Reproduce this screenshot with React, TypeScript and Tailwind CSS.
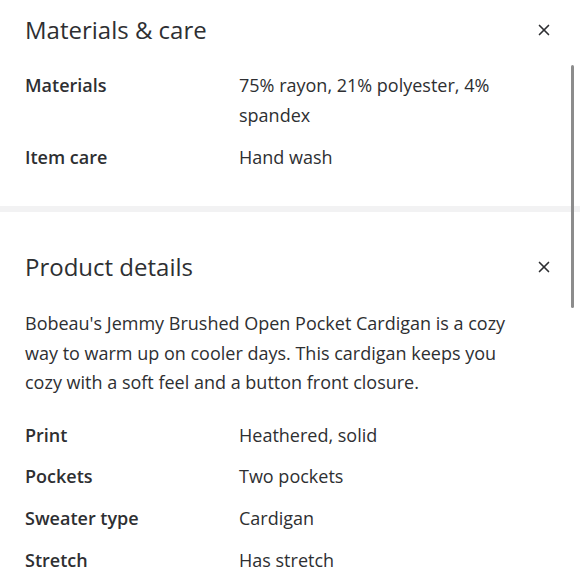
import { X } from 'lucide-react';

const care = [
  { label: 'Materials', value: '75% rayon, 21% polyester, 4% spandex' },
  { label: 'Item care', value: 'Hand wash' },
];

const details = [
  { label: 'Print', value: 'Heathered, solid' },
  { label: 'Pockets', value: 'Two pockets' },
  { label: 'Sweater type', value: 'Cardigan' },
  { label: 'Stretch', value: 'Has stretch' },
];

function Row({ label, value }: { label: string; value: string }) {
  return (
    <div className="flex">
      <div className="w-[214px] shrink-0 font-semibold">{label}</div>
      <div className="w-[270px]">{value}</div>
    </div>
  );
}

export default function App() {
  return (
    <div
      className="relative w-[580px] h-[580px] overflow-hidden bg-white text-[#2e2f32] text-[18px] leading-[30px]"
      style={{ fontFamily: '"Open Sans", Lato, sans-serif' }}
    >
      <section className="pl-[25px] pr-[28px] pt-[13px] pb-[34px]">
        <div className="flex items-center justify-between h-[34px]">
          <h2 className="text-[24px] leading-[34px]">Materials &amp; care</h2>
          <X className="w-[18px] h-[18px] mr-[-1px]" strokeWidth={2.2} />
        </div>
        <div className="mt-[23px] flex flex-col gap-[12px]">
          {care.map(r => (
            <Row key={r.label} {...r} />
          ))}
        </div>
      </section>

      <div className="h-[6px] bg-[#f2f2f3]" />

      <section className="pl-[25px] pr-[28px] pt-[38px]">
        <div className="flex items-center justify-between h-[34px]">
          <h2 className="text-[24px] leading-[34px]">Product details</h2>
          <X className="w-[18px] h-[18px] mr-[-1px]" strokeWidth={2.2} />
        </div>
        <p className="mt-[25px] w-[510px] leading-[29.5px]">
          Bobeau's Jemmy Brushed Open Pocket Cardigan is a cozy way to warm up on cooler days. This cardigan keeps you cozy with a soft feel and a button front closure.
        </p>
        <div className="mt-[22px] flex flex-col gap-[11.7px]">
          {details.map(r => (
            <Row key={r.label} {...r} />
          ))}
        </div>
      </section>

      <div className="absolute right-[6px] top-[65px] w-[3px] h-[243px] rounded-full bg-[#8c8c8c]" />
    </div>
  );
}
